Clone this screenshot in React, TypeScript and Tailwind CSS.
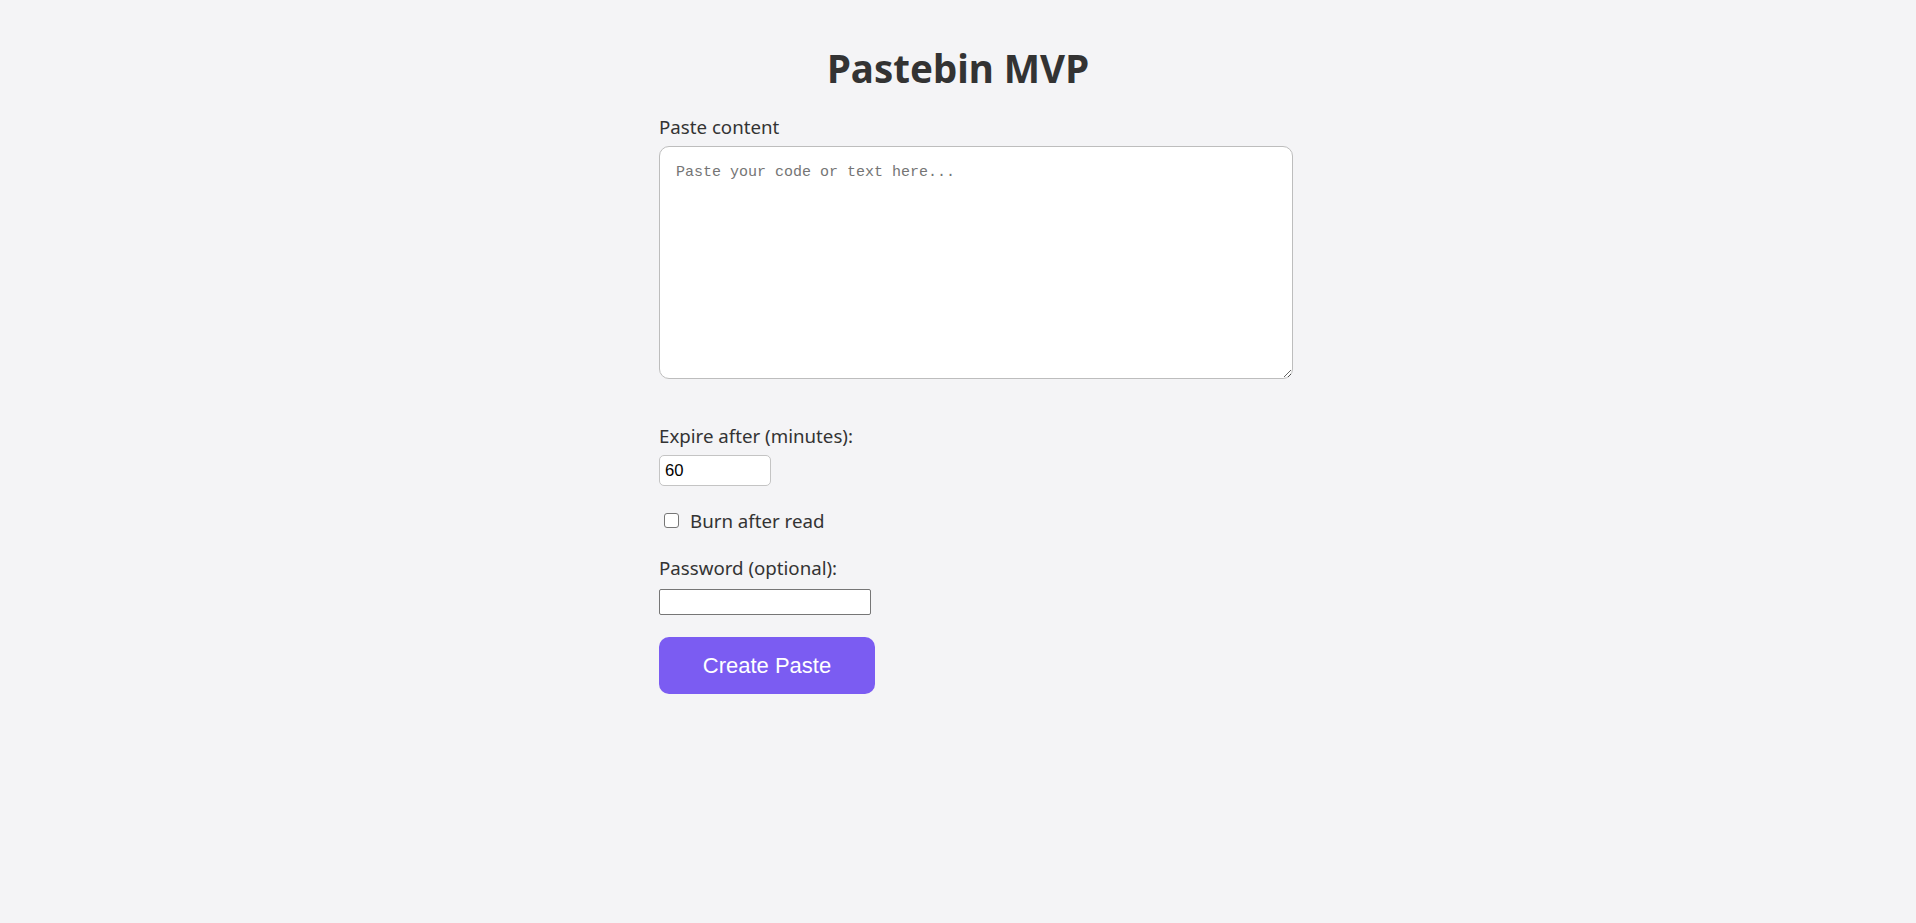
import { useState } from "react";

export default function App() {
  const [content, setContent] = useState("");
  const [expire, setExpire] = useState("60");
  const [burn, setBurn] = useState(false);
  const [password, setPassword] = useState("");

  return (
    <div className="min-h-screen bg-[#f4f4f6] font-['Noto_Sans',sans-serif] text-[#333]">
      <div className="mx-auto w-[598px] pt-[41px]">
        <h1 className="text-center text-[38.5px] font-bold leading-[54px]">
          Pastebin MVP
        </h1>

        <form className="mt-[18px] flex flex-col items-start">
          <label className="block text-[18.7px] leading-[27px]">
            Paste content
          </label>
          <textarea
            value={content}
            onChange={(e) => setContent(e.target.value)}
            placeholder="Paste your code or text here..."
            className="mt-[6px] box-content h-[199px] w-[600px] shrink-0 rounded-[10px] border border-[#bdbdbd] bg-white px-[16px] py-[16px] font-['Liberation_Mono',monospace] text-[15px] leading-[19px] text-[#333] placeholder:text-[#757575] focus:outline-none"
          />

          <label className="mt-[43px] block text-[18.7px] leading-[27px]">
            Expire after (minutes):
          </label>
          <input
            type="number"
            value={expire}
            onChange={(e) => setExpire(e.target.value)}
            className="mt-[6px] h-[31px] w-[112px] rounded-[5px] border border-[#c4c4c4] bg-white px-[5px] font-['Liberation_Sans',sans-serif] text-[16.67px] text-black focus:outline-none [appearance:textfield] [&::-webkit-inner-spin-button]:appearance-none"
          />

          <label className="mt-[21px] flex items-center text-[18.7px] leading-[27px]">
            <input
              type="checkbox"
              checked={burn}
              onChange={(e) => setBurn(e.target.checked)}
              className="ml-[5px] mr-[11px] h-[15px] w-[15px] appearance-none rounded-[3px] border border-[#767676] bg-white checked:bg-[#0075ff]"
            />
            Burn after read
          </label>

          <label className="mt-[20px] block text-[18.7px] leading-[27px]">
            Password (optional):
          </label>
          <input
            type="password"
            value={password}
            onChange={(e) => setPassword(e.target.value)}
            className="mt-[8px] h-[26px] w-[212px] rounded-[2px] border border-[#767676] bg-white px-[3px] font-['Liberation_Sans',sans-serif] text-[16.67px] focus:outline-none"
          />

          <button
            type="button"
            className="mt-[22px] h-[57px] w-[216px] rounded-[10px] bg-[#7b5cf2] font-['Liberation_Sans',sans-serif] text-[22px] text-white"
          >
            Create Paste
          </button>
        </form>
      </div>
    </div>
  );
}
